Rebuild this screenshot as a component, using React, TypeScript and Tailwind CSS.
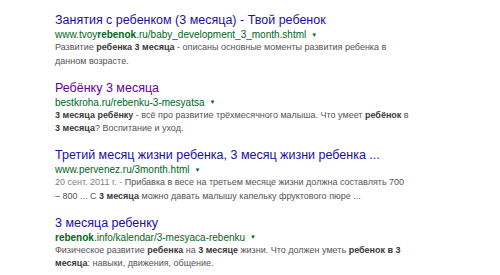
import React from 'react'

type Part = string | { b: string }

// snippets are split into the lines the screenshot shows
const results: {
  title: string
  visited?: boolean
  url: Part[]
  date?: string
  lines: Part[][]
}[] = [
  {
    title: 'Занятия с ребенком (3 месяца) - Твой ребенок',
    url: ['www.tvoy', { b: 'rebenok' }, '.ru/baby_development_3_month.shtml'],
    lines: [
      ['Развитие ', { b: 'ребенка 3 месяца' }, ' - описаны основные моменты развития ребенка в'],
      ['данном возрасте.'],
    ],
  },
  {
    title: 'Ребёнку 3 месяца',
    visited: true,
    url: ['bestkroha.ru/rebenku-3-mesyatsa'],
    lines: [
      [{ b: '3 месяца ребёнку' }, ' - всё про развитие трёхмесячного малыша. Что умеет ', { b: 'ребёнок' }, ' в'],
      [{ b: '3 месяца' }, '? Воспитание и уход.'],
    ],
  },
  {
    title: 'Третий месяц жизни ребенка, 3 месяц жизни ребенка ...',
    url: ['www.pervenez.ru/3month.html'],
    date: '20 сент. 2011 г. - ',
    lines: [
      ['Прибавка в весе на третьем месяце жизни должна составлять 700'],
      ['– 800 ... С ', { b: '3 месяца' }, ' можно давать малышу капельку фруктового пюре ...'],
    ],
  },
  {
    title: '3 месяца ребенку',
    url: [{ b: 'rebenok' }, '.info/kalendar/3-mesyaca-rebenku'],
    lines: [
      ['Физическое развитие ', { b: 'ребенка' }, ' на ', { b: '3 месяце' }, ' жизни. Что должен уметь ', { b: 'ребенок в 3' }],
      [{ b: 'месяца' }, ': навыки, движения, общение.'],
    ],
  },
]

const render = (parts: Part[], boldClass: string) =>
  parts.map((p, i) =>
    typeof p === 'string' ? <span key={i}>{p}</span> : <b key={i} className={boldClass}>{p.b}</b>
  )

export default function App() {
  return (
    <div className="w-[500px] h-[275px] bg-white overflow-hidden font-['Liberation_Sans',Arial,sans-serif]">
      <div className="pl-[55px] pt-[12px] flex flex-col gap-[11.5px]">
        {results.map((r, i) => (
          <div key={i} className="flex flex-col">
            <div
              className={`text-[12.5px] leading-[16px] whitespace-nowrap ${
                r.visited ? 'text-[#660099]' : 'text-[#1a0dab]'
              }`}
            >
              {r.title}
            </div>
            <div className="text-[10px] leading-[13px] text-[#006621] whitespace-nowrap flex items-center">
              <span>{render(r.url, 'font-bold')}</span>
              <span className="ml-[5px] text-[6px] leading-none">▼</span>
            </div>
            {r.lines.map((line, j) => (
              <div key={j} className="text-[9px] leading-[13.5px] text-[#545454] whitespace-nowrap">
                {j === 0 && r.date && <span className="text-[#808080]">{r.date}</span>}
                {render(line, 'font-bold text-[#3a3a3a]')}
              </div>
            ))}
          </div>
        ))}
      </div>
    </div>
  )
}
